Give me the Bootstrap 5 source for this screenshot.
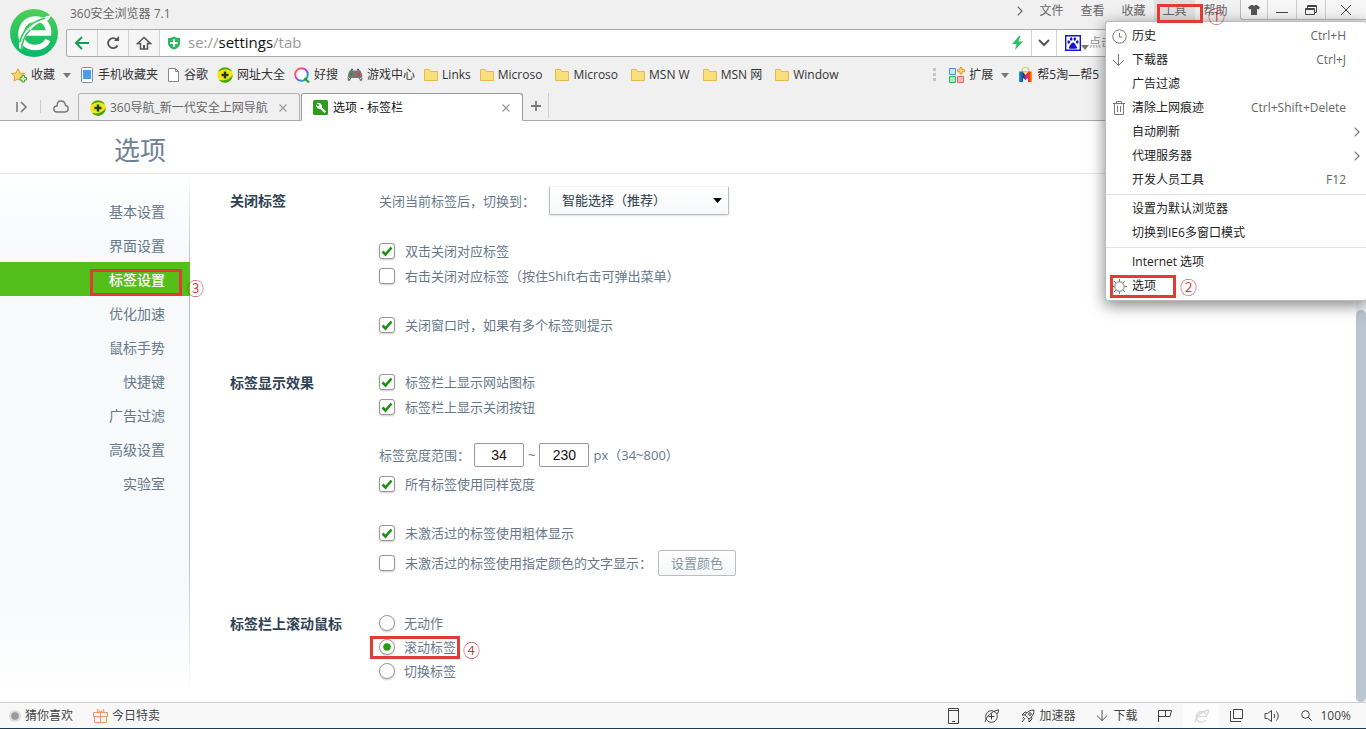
<!DOCTYPE html>
<html lang="zh-CN">
<head>
<meta charset="utf-8">
<meta name="viewport" content="width=device-width, initial-scale=1">
<title>选项 - 标签栏</title>
<link rel="stylesheet" href="https://cdn.jsdelivr.net/npm/bootstrap@5.3.0/dist/css/bootstrap.min.css">
<style>
  body { font: 12px/20px "Open Sans", "Noto Sans CJK SC", sans-serif; color: #333; background: #fff; }
  svg { flex: none; display: block; }
  button, a { color: inherit; text-decoration: none; }
  .plain { border: 0; background: none; padding: 0; }
  .line { fill: none; stroke: currentColor; stroke-width: 1; }

  /* browser frame */
  .chrome { background: #f0f0f0; }
  .logo-cell { width: 66px; padding: 9px 0 0 10px; }
  .title-row { height: 29px; color: #666; }
  .menu-btn { width: 41px; height: 22px; }
  .menu-btn.open { background: #e0e0e0; }
  .win-box { height: 20px; border: 1px solid #bbb; border-width: 0 0 1px 1px; border-radius: 0 0 0 3px; background: #f6f6f6; color: #444; }
  .win-box button { width: 29px; border-right: 1px solid #ccc; }
  .win-box button:first-child { width: 27px; }
  .win-box button:last-child { width: 40px; border: 0; }
  .address { height: 28px; border: 1px solid #aaa; border-right: 0; border-radius: 3px 0 0 3px; background: #fff; overflow: hidden; }
  .address .tool { width: 31px; background: #f6f6f6; border-right: 1px solid #d0d0d0; color: #555; }
  .url { font-size: 15px; line-height: 24px; color: #999; }
  .url b { font-weight: 400; color: #111; }
  .go { width: 26px; border: 1px solid #d4d4d4; border-width: 0 1px; color: #555; }
  .search-field { width: 277px; border: 0; outline: 0; padding: 0; color: #999; }
  .search-field::placeholder { color: #999; opacity: 1; }
  .bookmarks { height: 36px; padding: 0 267px 0 11px; gap: 9px; white-space: nowrap; }
  .bookmarks a, .bookmarks button { gap: 4px; }
  .bookmarks .dir { margin-right: 4px; }
  .caret { border: 4px solid transparent; border-top: 5px solid #777; border-bottom: 0; }
  .dots { width: 3px; height: 14px; background: repeating-linear-gradient(#c4c4c4 0 3px, transparent 3px 5px); }

  .tab-row { height: 28px; border-bottom: 1px solid #aaa; line-height: 22px; }
  .side-tools { width: 78px; padding-left: 16px; color: #777; }
  .side-tools i { width: 1px; height: 13px; background: #ccc; }
  .page-tab { width: 222px; height: 28px; padding: 1px 12px 0 11px; border: 1px solid #b4b4b4; border-bottom-color: #aaa; border-radius: 3px 3px 0 0; color: #666; gap: 4px; }
  .page-tab.current { margin-left: 1px; background: #fff; color: #111; border-color: #999 #999 #fff; }
  .add-tab { width: 26px; height: 25px; border-right: 1px solid #d0d0d0; color: #777; }

  /* tools menu */
  .tools-menu { position: absolute; right: 0; top: 21px; width: 261px; padding: 2px 0; background: #fff; border: 1px solid #bbb; border-right: 0; border-radius: 3px; box-shadow: 0 4px 16px rgba(0,0,0,.5); z-index: 10; color: #222; }
  .tools-menu li { position: relative; }
  .tools-menu button { width: 100%; height: 24px; padding: 0 20px 0 6px; color: #222; }
  .tools-menu svg { color: #777; }
  .tools-menu .slot { width: 20px; }
  .tools-menu kbd { margin-left: auto; padding: 0; background: none; font: inherit; color: #666; }
  .tools-menu .more { position: absolute; right: 6px; top: 7px; }
  .tools-menu .rule { height: 1px; margin: 2px 0; background: #e2e2e2; }

  /* settings page */
  .page-head { height: 53px; border-bottom: 1px solid #e1e7ea; }
  .page-head h1 { margin: 0 0 0 114px; font-size: 26px; line-height: 58px; font-weight: 400; color: #6d8294; }
  .side-nav { width: 190px; padding-top: 20px; margin-bottom: 8px; font-size: 14px; color: #66788a; background: linear-gradient(#fff, #f7f9fb 80px, #f7f9fb 420px, #fff); border-right: 1px solid; border-image: linear-gradient(#fff, #b8c0c6 90px, #b8c0c6 380px, #fff) 1; }
  .side-nav a { display: block; position: relative; height: 34px; line-height: 36px; padding-right: 24px; text-align: right; }
  .side-nav a.active { background: #54bf1a; color: #fff; margin-right: -1px; padding-right: 25px; font-weight: 500; }
  .settings { padding: 13px 0 0 40px; font-size: 13px; color: #67788a; }
  .section + .section { margin-top: 32px; }
  .section.wheel { padding-top: 2px; }
  .section h2 { width: 149px; margin: 0; font-size: 14px; line-height: 28px; font-weight: 700; color: #2f4254; }
  .group + .group { margin-top: 24px; }
  .opt { display: flex; align-items: center; position: relative; height: 25px; }
  .opt.tall { height: 27px; }
  .opt.field { height: 24px; margin-bottom: 4px; gap: 4px; }
  .opt.last-tall { margin-top: 4px; }
  .radios { padding-top: 1px; }
  .radios .opt { height: 24px; }
  .opt .form-check-input { width: 16px; height: 16px; margin: 0 10px 0 0; border: 1px solid #999; border-radius: 3px; box-shadow: 0 1px 2px rgba(0,0,0,.2); background-color: #fff; }
  .opt .form-check-input[type=radio] { border-radius: 50%; margin-right: 9px; }
  .opt .form-check-input:checked { background-size: 14px 14px; }
  .opt .form-check-input[type=checkbox]:checked { background-image: url("data:image/svg+xml,%3Csvg xmlns='http://www.w3.org/2000/svg' viewBox='0 0 14 14'%3E%3Cpath d='M2.5 7.5 5.5 10.5 11.5 3.5' fill='none' stroke='%231d9112' stroke-width='2.6'/%3E%3C/svg%3E"); }
  .opt .form-check-input[type=radio]:checked { background-image: url("data:image/svg+xml,%3Csvg xmlns='http://www.w3.org/2000/svg' viewBox='0 0 14 14'%3E%3Ccircle cx='7' cy='7' r='3.8' fill='%2323a010'/%3E%3C/svg%3E"); }
  .switch-to { width: 180px; height: 29px; margin-left: 14px; padding: 0 12px; border: 1px solid #b5bcc2; border-top-color: #f3f3f3; border-radius: 2px; font-size: 13px; line-height: 27px; color: #2c3c4c; box-shadow: 0 1px 2px rgba(0,0,0,.12);
    background: url("data:image/svg+xml,%3Csvg xmlns='http://www.w3.org/2000/svg' viewBox='0 0 9 5'%3E%3Cpath d='M0 0h9L4.500 5z'/%3E%3C/svg%3E") right 6px center / 9px 5px no-repeat, linear-gradient(#fff, #f6f8f9); }
  .num { width: 50px; height: 24px; padding: 0; border: 1px solid #999; border-radius: 2px; font-size: 14px; color: #111; text-align: center; font-family: "Liberation Sans", sans-serif; }
  .color-btn { width: 78px; height: 26px; margin-left: 6px; padding: 0; border: 1px solid #b9bfc4; border-radius: 2px; background: linear-gradient(#fff, #f6f7f8); font-size: 13px; line-height: 24px; color: #8797a6; }
  .scroll { width: 10px; padding-top: 136px; background: #edf2f5; }
  .scroll div { border-radius: 5px; background: #b9c6d1; }

  /* status bar */
  .status { height: 27px; border-top: 1px solid #ccc; border-bottom: 1px solid #1d3a54; background: #f8f8f8; padding: 0 15px 0 9px; color: #444; }
  .status .plain { gap: 4px; height: 24px; }
  .status .right { gap: 21px; }
  .ghost-cell { background: #fdfdfd; width: 36px; margin: 0 -10px; }

  /* step frames with their numbers */
  .step { position: absolute; border: 3px solid #e23a35; pointer-events: none; z-index: 20; }
  .step span { position: absolute; color: #c1171d; font: 300 17px/17px "Noto Sans CJK SC", sans-serif; width: 17px; }
  .step-1 { left: 3px; top: 4px; width: 46px; height: 19px; }
  .step-1 span { left: 48px; top: 0; }
  .step-2 { left: 4px; top: 1px; width: 66px; height: 23px; }
  .step-2 span { left: 67px; top: 0; }
  .step-3 { left: 90px; top: 7px; width: 92px; height: 27px; }
  .step-3 span { left: 94px; top: 7px; }
  .step-4 { left: -9px; top: 1px; width: 90px; height: 23px; }
  .step-4 span { left: 90px; top: 2px; }
</style>
</head>
<body class="vh-100 d-flex flex-column overflow-hidden">
<svg width="0" height="0" class="position-absolute">
  <defs>
    <linearGradient id="green" x2="0" y2="1"><stop stop-color="#4fcf58"/><stop offset="1" stop-color="#05b96a"/></linearGradient>
    <linearGradient id="rainbow" x2="1" y2="1"><stop stop-color="#f80"/><stop offset=".4" stop-color="#e3c"/><stop offset=".7" stop-color="#28e"/><stop offset="1" stop-color="#2b4"/></linearGradient>
    <linearGradient id="bagfill" x2="1"><stop stop-color="#15a0dc"/><stop offset=".35" stop-color="#243c8c"/><stop offset=".55" stop-color="#e1218c"/><stop offset=".8" stop-color="#ee3a24"/><stop offset="1" stop-color="#fa0"/></linearGradient>
    <symbol id="folder" viewBox="0 0 14 14"><path d="M.5 1.500h5l1 2h7v9H.5z" fill="#f9e07c" stroke="#e8b94a"/></symbol>
    <symbol id="nav360" viewBox="0 0 16 16"><circle cx="8" cy="8" r="7.800" fill="#f7e414"/><path d="M1 5A7.800 7.800 0 0 1 15 4.500Q8 0 1 5M15.700 8A7.800 7.800 0 0 1 2 13Q11 15 15.700 8" fill="#3aa51d"/><path d="M8 4.500v7M4.500 8h7" stroke="#163c12" stroke-width="2.400"/></symbol>
    <symbol id="close" viewBox="0 0 8 8"><path d="M.5.5l7 7M7.500.5l-7 7" fill="none" stroke="#999" stroke-width="1.200"/></symbol>
    <symbol id="down" viewBox="0 0 14 14"><path class="line" d="M6.500 1v11.500M1 7l5.500 5.500L12 7"/></symbol>
    <symbol id="next" viewBox="0 0 6 10"><path d="M.7.7 5 5 .7 9.300" fill="none" stroke="currentColor" stroke-width="1.200"/></symbol>
  </defs>
</svg>

<header class="chrome position-relative">
  <div class="d-flex">
    <div class="logo-cell">
      <svg width="48" height="48" viewBox="0 0 48 48"><circle cx="24" cy="24" r="24" fill="url(#green)"/><path d="M16 24H38.500C39 15 33 10 25.500 10 16 10 11 17 11 25.500 11 33 17 38.500 25 38.500 31 38.500 35.500 36 38 31" fill="none" stroke="#fff" stroke-width="5.600"/><path d="M9 39C9 26 17 14 32 9 36 7 39 7 41 6 40 11 36 13 31 13 22 17 14 26 12 41z" fill="#fff"/><path d="M10 33C12 22 21 13 35 9M11 42C12 32 15 26 20 21" fill="none" stroke="#36c660" stroke-width="1.600"/></svg>
    </div>
    <div class="flex-grow-1">
      <div class="title-row d-flex align-items-start">
        <span class="pt-1 ps-1">360安全浏览器 7.1</span>
        <nav class="ms-auto d-flex">
          <button class="plain d-flex align-items-center me-1 pe-1" aria-label="收起"><svg width="6" height="10"><use href="#next"/></svg></button>
          <button class="plain menu-btn">文件</button><button class="plain menu-btn">查看</button><button class="plain menu-btn">收藏</button>
          <span class="position-relative"><button class="plain menu-btn open">工具</button><span class="step step-1"><span>①</span></span></span>
          <button class="plain menu-btn">帮助</button>
        </nav>
        <div class="win-box d-flex ms-1">
          <button class="plain d-flex align-items-center justify-content-center" aria-label="皮肤"><svg width="12" height="10" viewBox="0 0 12 10"><path d="M3 0h1.500q1.500 1.500 3 0H9l3 2.500-1.500 2L9 4v6H3V4l-1.500.5L0 2.500z" fill="#555"/></svg></button>
          <button class="plain d-flex align-items-center justify-content-center" aria-label="最小化"><svg width="12" height="10"><path class="line" d="M0 7.500h12"/></svg></button>
          <button class="plain d-flex align-items-center justify-content-center" aria-label="还原"><svg width="12" height="10" viewBox="0 0 12 10"><path class="line" d="M.5 3.500h9v6h-9zM2.500 3V.5h9v7H10M.5 4.500h9M2.500 1.500h9"/></svg></button>
          <button class="plain d-flex align-items-center justify-content-center" aria-label="关闭"><svg width="10" height="10"><path class="line" d="M0 0l10 10M10 0L0 10"/></svg></button>
        </div>
      </div>
      <div class="address d-flex align-items-stretch">
        <button class="plain tool d-flex align-items-center justify-content-center" aria-label="后退"><svg width="16" height="14" viewBox="0 0 16 14"><path d="M8 1 2 7l6 6M2 7h13" fill="none" stroke="#12a150" stroke-width="2"/></svg></button>
        <button class="plain tool d-flex align-items-center justify-content-center" aria-label="刷新"><svg width="14" height="14" viewBox="0 0 14 14"><path d="M11.500 9.500A5 5 0 1 1 10.500 3.500" fill="none" stroke="#555" stroke-width="1.800"/><path d="M8 5h5V0z" fill="#555"/></svg></button>
        <button class="plain tool d-flex align-items-center justify-content-center" aria-label="主页"><svg width="16" height="14" viewBox="0 0 16 14"><path d="M1.500 7.500 8 1.500l6.500 6h-3v5.500h-7V7.500z" fill="none" stroke="#555" stroke-width="1.500"/><path d="M7 9h2v4H7z" fill="#555"/></svg></button>
        <span class="d-flex align-items-center ps-2"><svg width="12" height="14" viewBox="0 0 13 14"><path d="M0 1.500Q4 2 6.500 0 9 2 13 1.500v7Q11 13 6.500 14 2 13 0 8.500z" fill="#28b860"/><path d="M6.500 3v8M2.500 7h8" stroke="#fff" stroke-width="2.200"/></svg></span>
        <span class="url ms-2 flex-grow-1">se://<b>settings</b>/tab</span>
        <span class="d-flex align-items-center pe-2"><svg width="11" height="14" viewBox="0 0 11 14"><path d="M7 0 0 8h4.500L3 14l8-8.500H6.500L8.500 0z" fill="#2dbf68"/></svg></span>
        <button class="plain go d-flex align-items-center justify-content-center" aria-label="展开"><svg width="12" height="8"><path d="M1 1l5 5 5-5" fill="none" stroke="#555" stroke-width="2"/></svg></button>
        <button class="plain d-flex align-items-center ps-1 ms-1" aria-label="百度"><svg width="16" height="16" viewBox="0 0 16 16"><path d="M.7.7h14.600v14.600H.7z" fill="#fff" stroke="#1414d2" stroke-width="1.400"/><g fill="#1414d2"><ellipse cx="3.700" cy="7" rx="1.300" ry="1.700"/><ellipse cx="6.200" cy="4" rx="1.300" ry="1.700"/><ellipse cx="9.800" cy="4" rx="1.300" ry="1.700"/><ellipse cx="12.300" cy="7" rx="1.300" ry="1.700"/><path d="M8 7.500q1.500 0 2.200 1.700t1.800 3-2 1.500H6q-2.500 0-2-1.500 .5-1.300 1.800-3Q6.500 7.500 8 7.500"/></g></svg><span class="caret mt-2"></span></button>
        <input class="search-field" type="text" placeholder="点击搜索" aria-label="搜索">
      </div>
    </div>
  </div>

  <div class="bookmarks d-flex align-items-center">
    <button class="plain d-flex align-items-center"><svg width="16" height="15" viewBox="0 0 16 15"><path d="M7 .8 9 5l4.500.5L10 8.500l1 4.500-4-2-4 2 .8-4.500L.5 5.500 5 5z" fill="#fbd56a" stroke="#dda33c"/><path d="M9 9.500h2v-2h2.500v2h2V12h-2v2H11v-2H9z" fill="#dff5cf" stroke="#45a72a"/></svg>收藏<span class="caret ms-1"></span></button>
    <a href="#" class="d-flex align-items-center"><svg width="14" height="16" viewBox="0 0 14 16"><rect x="1.500" y=".5" width="11" height="15" rx="1" fill="#fff" stroke="#7b8ea6"/><path d="M3 3h8v9H3z" fill="#4a9cf0"/></svg>手机收藏夹</a>
    <a href="#" class="d-flex align-items-center"><svg width="13" height="14" viewBox="0 0 13 14"><path d="M1.500.5h7l3 3v10h-10zM8.500.5v3h3" fill="#fff" stroke="#888"/></svg>谷歌</a>
    <a href="#" class="d-flex align-items-center"><svg width="16" height="16"><use href="#nav360"/></svg>网址大全</a>
    <a href="#" class="d-flex align-items-center"><svg width="16" height="16" viewBox="0 0 16 16"><circle cx="7.500" cy="7.500" r="6.300" fill="#fff" stroke="url(#rainbow)" stroke-width="2"/><path d="M10.500 11l4.500 4.500" stroke="#2b9b3c" stroke-width="2.200"/></svg>好搜</a>
    <a href="#" class="d-flex align-items-center"><svg width="16" height="14" viewBox="0 0 16 14"><path d="M4 2q4 1 8 0 2 0 3 5t-.5 6-3-3h-7Q3 14 1.500 13T1 7t3-5" fill="#777"/><path d="M4 1.500h2M10 1.500h2" stroke="#555" stroke-width="1.500"/><path d="M4.500 4v4M2.500 6h4" stroke="#2f8f3c" stroke-width="1.200"/><circle cx="11.500" cy="6" r="1.700" fill="#d8403c"/><path d="M1.500 9.500l2 2M14.500 9.500l-2 2" stroke="#ddd"/></svg>游戏中心</a>
    <a href="#" class="d-flex align-items-center"><svg width="14" height="14"><use href="#folder"/></svg>Links</a>
    <a href="#" class="dir d-flex align-items-center"><svg width="14" height="14"><use href="#folder"/></svg>Microso</a>
    <a href="#" class="dir d-flex align-items-center"><svg width="14" height="14"><use href="#folder"/></svg>Microso</a>
    <a href="#" class="dir d-flex align-items-center"><svg width="14" height="14"><use href="#folder"/></svg>MSN W</a>
    <a href="#" class="dir d-flex align-items-center"><svg width="14" height="14"><use href="#folder"/></svg>MSN 网</a>
    <a href="#" class="dir d-flex align-items-center"><svg width="14" height="14"><use href="#folder"/></svg>Window</a>
    <span class="dots ms-auto"></span>
    <button class="plain d-flex align-items-center ms-1"><svg width="16" height="16" viewBox="0 0 16 16"><path d="M.5 1.500h6v6h-6z" fill="#cfe4fa" stroke="#4b8fd0"/><path d="M.5 9.500h6v6h-6z" fill="#a9efc0" stroke="#3cab63"/><path d="M8.500 9.500h6v6h-6z" fill="#fbb9b5" stroke="#d86a64"/><path d="M11 .5h2v2.200h2.500v2H13V7h-2V4.700H8.500v-2H11z" fill="#fde17a" stroke="#e09a2c"/></svg>扩展<span class="caret ms-1"></span></button>
    <a href="#" class="d-flex align-items-center"><svg width="15" height="16" viewBox="0 0 15 16"><path d="M4 6V3q0-2.500 3.500-2.500T11 3v3" fill="none" stroke="#b7cf4a"/><path d="M1 4.500h13V15h-4v-4l-2.500 2L5 11v4H1z" fill="url(#bagfill)"/><path d="M4.500 4.500h6L7.500 8z" fill="#fbe36a"/></svg>帮5淘—帮5</a>
  </div>

  <div class="tab-row d-flex">
    <div class="side-tools d-flex align-items-center gap-2">
      <button class="plain" aria-label="侧栏"><svg width="12" height="12" viewBox="0 0 12 12"><path d="M1 1v10M5 1l5 5-5 5" fill="none" stroke="currentColor" stroke-width="1.500"/></svg></button>
      <i class="ms-1"></i>
      <button class="plain ms-1" aria-label="云同步"><svg width="16" height="13" viewBox="0 0 16 13"><path d="M4 12Q.8 12 .8 9T4 6Q4 1 8 1t4.500 4.500q2.700.5 2.700 3.200T12 12z" fill="none" stroke="currentColor" stroke-width="1.400"/></svg></button>
    </div>
    <div class="page-tab d-flex align-items-center"><svg width="16" height="16"><use href="#nav360"/></svg>360导航_新一代安全上网导航<button class="plain ms-auto" aria-label="关闭标签"><svg width="8" height="8"><use href="#close"/></svg></button></div>
    <div class="page-tab current d-flex align-items-center"><svg width="16" height="16" viewBox="0 0 16 16"><rect width="15" height="15" rx="1.500" fill="#2f9a1c"/><path d="M3.500 3A4 4 0 0 1 9 7.500l4 4L11.500 13l-4-4A4 4 0 0 1 3 4.500L5 6.500l1.500-1.500z" fill="#fff"/></svg>选项 - 标签栏<button class="plain ms-auto" aria-label="关闭标签"><svg width="8" height="8"><use href="#close"/></svg></button></div>
    <button class="plain add-tab d-flex align-items-center justify-content-center" aria-label="新建标签"><svg width="10" height="10"><path d="M5 0v10M0 5h10" stroke="currentColor" stroke-width="1.800"/></svg></button>
  </div>

  <ul class="tools-menu list-unstyled mb-0">
    <li><button class="plain d-flex align-items-center"><span class="slot"><svg width="15" height="15" viewBox="0 0 15 15"><circle class="line" cx="7.500" cy="7.500" r="6.700"/><path class="line" d="M7.500 4v4H10"/></svg></span>历史<kbd>Ctrl+H</kbd></button></li>
    <li><button class="plain d-flex align-items-center"><span class="slot"><svg width="14" height="14"><use href="#down"/></svg></span>下载器<kbd>Ctrl+J</kbd></button></li>
    <li><button class="plain d-flex align-items-center"><span class="slot"></span>广告过滤</button></li>
    <li><button class="plain d-flex align-items-center"><span class="slot"><svg width="14" height="14" viewBox="0 0 14 14"><path class="line" d="M1 2.500h12M4.500 2.500v-2h5v2M2.500 2.500v11h9v-11M5.500 5v6M8.500 5v6"/></svg></span>清除上网痕迹<kbd>Ctrl+Shift+Delete</kbd></button></li>
    <li><button class="plain d-flex align-items-center"><span class="slot"></span>自动刷新</button><svg class="more" width="6" height="10"><use href="#next"/></svg></li>
    <li><button class="plain d-flex align-items-center"><span class="slot"></span>代理服务器</button><svg class="more" width="6" height="10"><use href="#next"/></svg></li>
    <li><button class="plain d-flex align-items-center"><span class="slot"></span>开发人员工具<kbd>F12</kbd></button></li>
    <li class="rule"></li>
    <li><button class="plain d-flex align-items-center"><span class="slot"></span>设置为默认浏览器</button></li>
    <li><button class="plain d-flex align-items-center"><span class="slot"></span>切换到IE6多窗口模式</button></li>
    <li class="rule"></li>
    <li><button class="plain d-flex align-items-center"><span class="slot"></span>Internet 选项</button></li>
    <li><button class="plain d-flex align-items-center"><span class="slot"><svg width="15" height="15" viewBox="0 0 15 15"><circle class="line" cx="7.500" cy="7.500" r="4.700"/><path class="line" d="M7.500 0v2.500M7.500 12.500V15M0 7.500h2.500M12.500 7.500H15M2 2l2 2M11 11l2 2M13 2l-2 2M4 11l-2 2"/></svg></span>选项</button><span class="step step-2"><span>②</span></span></li>
  </ul>
</header>

<div class="page-head"><h1>选项</h1></div>
<div class="d-flex flex-grow-1">
  <nav class="side-nav flex-shrink-0">
    <a href="#">基本设置</a><a href="#">界面设置</a>
    <a href="#" class="active">标签设置<span class="step step-3"><span>③</span></span></a>
    <a href="#">优化加速</a><a href="#">鼠标手势</a><a href="#">快捷键</a><a href="#">广告过滤</a><a href="#">高级设置</a><a href="#">实验室</a>
  </nav>
  <main class="settings flex-grow-1">
    <section class="section d-flex">
      <h2>关闭标签</h2>
      <div>
        <div class="group"><div class="opt tall"><label for="switchTo">关闭当前标签后，切换到：</label><select id="switchTo" class="form-select switch-to"><option>智能选择（推荐）</option></select></div></div>
        <div class="group">
          <div class="opt"><input class="form-check-input" type="checkbox" id="c1" checked><label for="c1">双击关闭对应标签</label></div>
          <div class="opt"><input class="form-check-input" type="checkbox" id="c2"><label for="c2">右击关闭对应标签（按住Shift右击可弹出菜单）</label></div>
        </div>
        <div class="group"><div class="opt"><input class="form-check-input" type="checkbox" id="c3" checked><label for="c3">关闭窗口时，如果有多个标签则提示</label></div></div>
      </div>
    </section>
    <section class="section d-flex">
      <h2>标签显示效果</h2>
      <div>
        <div class="group">
          <div class="opt"><input class="form-check-input" type="checkbox" id="c4" checked><label for="c4">标签栏上显示网站图标</label></div>
          <div class="opt"><input class="form-check-input" type="checkbox" id="c5" checked><label for="c5">标签栏上显示关闭按钮</label></div>
        </div>
        <div class="group">
          <div class="opt field"><label for="wmin">标签宽度范围：</label><input class="num" id="wmin" type="text" value="34"><label for="wmax">~</label><input class="num" id="wmax" type="text" value="230"><span>px（34~800）</span></div>
          <div class="opt"><input class="form-check-input" type="checkbox" id="c6" checked><label for="c6">所有标签使用同样宽度</label></div>
        </div>
        <div class="group">
          <div class="opt"><input class="form-check-input" type="checkbox" id="c7" checked><label for="c7">未激活过的标签使用粗体显示</label></div>
          <div class="opt tall last-tall"><input class="form-check-input" type="checkbox" id="c8"><label for="c8">未激活过的标签使用指定颜色的文字显示：</label><button class="color-btn">设置颜色</button></div>
        </div>
      </div>
    </section>
    <section class="section wheel d-flex">
      <h2>标签栏上滚动鼠标</h2>
      <div class="radios">
        <div class="opt"><input class="form-check-input" type="radio" name="wheel" id="r1"><label for="r1">无动作</label></div>
        <div class="opt"><input class="form-check-input" type="radio" name="wheel" id="r2" checked><label for="r2">滚动标签</label><span class="step step-4"><span>④</span></span></div>
        <div class="opt"><input class="form-check-input" type="radio" name="wheel" id="r3"><label for="r3">切换标签</label></div>
      </div>
    </section>
  </main>
  <div class="scroll d-flex"><div class="w-100"></div></div>
</div>

<footer class="status d-flex align-items-center flex-shrink-0">
  <button class="plain d-flex align-items-center"><svg width="12" height="12"><circle cx="6" cy="6" r="6" fill="#ddd"/><circle cx="6" cy="6" r="3.800" fill="#999"/></svg>猜你喜欢</button>
  <button class="plain d-flex align-items-center ms-3 ps-1"><svg width="15" height="14" viewBox="0 0 15 14"><path d="M.5 3.500h14v4H.5zM1.500 7.500v6h12v-6M7.500 3.500v10M7.500 3.500Q3 3 4 1t3.500 2.500Q10-1 11 1T7.500 3.500" fill="none" stroke="#f0956e"/></svg>今日特卖</button>
  <div class="right ms-auto d-flex align-items-center">
    <button class="plain me-1" aria-label="手机"><svg width="11" height="16" viewBox="0 0 11 16"><path class="line" d="M.5.5h10v15H.5zM.5 2.500h10M4 13.500h3"/></svg></button>
    <button class="plain" aria-label="加速球"><svg width="16" height="14" viewBox="0 0 16 14"><circle class="line" cx="7.500" cy="7.500" r="5.800"/><path class="line" d="M1 13Q3 4 14.500.7 15 3 13 5M4.500 7.500h6M7.500 4.500v6"/></svg></button>
    <button class="plain d-flex align-items-center"><svg width="14" height="14" viewBox="0 0 14 14"><path class="line" d="M4 6Q7 1 13 1q0 6-5 9L4 6 1 6l3-3 2 .5M8 10v3l3-3-.5-2M4 9l-3 4M1.500 9.500 3 8"/><circle class="line" cx="9" cy="5" r="1.300"/></svg>加速器</button>
    <button class="plain d-flex align-items-center"><svg width="13" height="13"><use href="#down"/></svg>下载</button>
    <button class="plain" aria-label="标记"><svg width="14" height="12" viewBox="0 0 14 12"><path class="line" d="M.5 12V.5h13L12 6.500H7.500v-6M.5 6.500h7"/></svg></button>
    <button class="plain ghost-cell d-flex align-items-center justify-content-center" aria-label="兼容模式"><svg width="15" height="14" viewBox="0 0 15 14"><path d="M4 7.500h8.500A5.200 5.200 0 1 0 11.500 11M1 13Q3 4 14 .8q1 2-1 5" fill="none" stroke="#d4d4d4" stroke-width="1.200"/></svg></button>
    <button class="plain" aria-label="窗口"><svg width="13" height="13" viewBox="0 0 13 13"><path class="line" d="M3.500.5h9v9h-9zM.5 2v10.500H11"/></svg></button>
    <button class="plain" aria-label="声音"><svg width="16" height="12" viewBox="0 0 16 12"><path class="line" d="M1 3.500h2.500L7.500.5v11L3.500 8.500H1zM10 4q1.500 2 0 4M12.500 1.500q3.500 4.500 0 9"/></svg></button>
    <button class="plain d-flex align-items-center gap-2"><svg width="11" height="11"><circle class="line" cx="4.500" cy="4.500" r="3.800"/><path class="line" d="M7.200 7.200l3.500 3.500"/></svg>100%</button>
  </div>
</footer>
<script src="https://cdn.jsdelivr.net/npm/bootstrap@5.3.0/dist/js/bootstrap.bundle.min.js"></script>
</body>
</html>
